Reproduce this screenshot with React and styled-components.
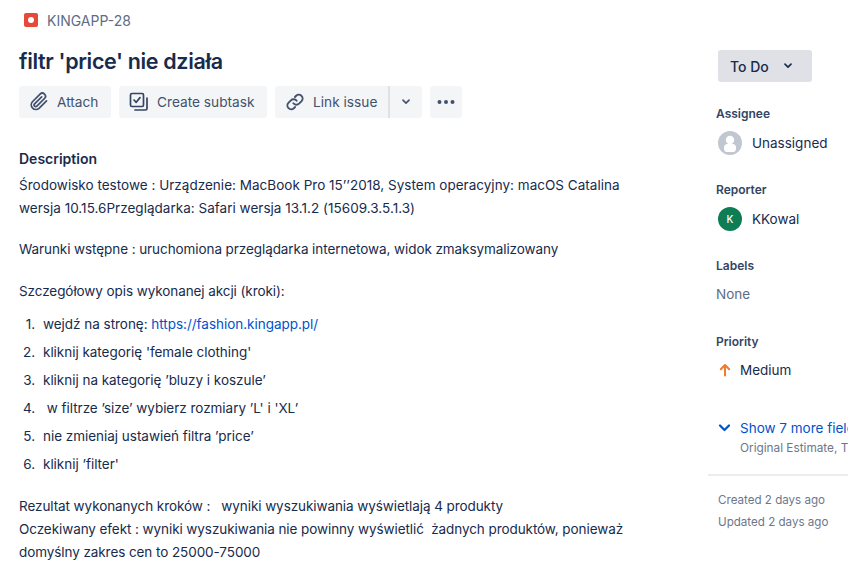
import styled, { createGlobalStyle } from 'styled-components';

const GlobalStyle = createGlobalStyle`
	html, body {
		margin: 0;
		padding: 0;
		background: #fff;
		overflow: hidden;
	}
	body {
		font-family: Inter, "Noto Sans", sans-serif;
		font-size: 13.5px;
		color: #172b4d;
	}
`;

const Page = styled.div`
	display: flex;
	width: 848px;
	height: 575px;
	overflow: hidden;
`;

const Main = styled.main`
	width: 708px;
	flex-shrink: 0;
	padding: 11px 0 0 19px;
	box-sizing: border-box;
`;

const Breadcrumb = styled.div`
	display: flex;
	align-items: center;
	gap: 9px;
	height: 18px;
	padding-left: 5px;
	color: #5e6c84;
	font-size: 14px;
`;

const BugIcon = styled.span`
	display: flex;
	align-items: center;
	justify-content: center;
	width: 14px;
	height: 14px;
	border-radius: 2px;
	background: #e5493a;

	&::after {
		content: '';
		width: 6px;
		height: 6px;
		border-radius: 50%;
		background: #fff;
	}
`;

const Title = styled.h1`
	margin: 17px 0 0;
	font-size: 21.5px;
	line-height: 30px;
	font-weight: 600;
	letter-spacing: -0.35px;
	color: #172b4d;
`;

const Toolbar = styled.div`
	display: flex;
	gap: 8px;
	margin-top: 10px;
`;

const ToolButton = styled.button`
	display: flex;
	align-items: center;
	gap: 8px;
	height: 32px;
	padding: 0 12.5px 0 10px;
	border: 0;
	border-radius: 3px;
	background: #f4f5f7;
	color: #42526e;
	font: inherit;
	font-size: 13.7px;
	white-space: nowrap;
`;

const ButtonGroup = styled.div`
	display: flex;
`;

const GroupStart = styled(ToolButton)`
	width: 115px;
	padding-right: 0;
	border-radius: 3px 0 0 3px;
	border-right: 2px solid #dfe1e6;
`;

const GroupEnd = styled(ToolButton)`
	width: 32px;
	padding: 0;
	justify-content: center;
	border-radius: 0 3px 3px 0;
`;

const MoreButton = styled(ToolButton)`
	width: 32px;
	padding: 0;
	justify-content: center;
`;

const Description = styled.section`
	margin-top: 29px;
	width: 640px;
	line-height: 23px;
	color: #172b4d;
`;

const SectionHeading = styled.h2`
	margin: 0 0 4px;
	font-size: 14px;
	line-height: 23px;
	font-weight: 600;
`;

const Paragraph = styled.p`
	margin: 0 0 ${(p) => p.$after || 0}px;
	white-space: pre-wrap;
	letter-spacing: ${(p) => (p.$loose ? 0.02 : -0.08)}px;
`;

const Steps = styled.ol`
	margin: 0 0 17px;
	padding: 0;
	list-style: none;
	counter-reset: step;
`;

const Step = styled.li`
	height: 28px;
	line-height: 28px;
	white-space: pre;
	counter-increment: step;
	letter-spacing: -0.03px;

	&::before {
		content: counter(step) '.';
		display: inline-block;
		width: 16px;
		margin-right: 8px;
		text-align: right;
	}
`;

const Link = styled.a`
	color: #0052cc;
	text-decoration: none;
`;

const Sidebar = styled.aside`
	width: 140px;
	flex-shrink: 0;
	padding-top: 50px;
	box-sizing: border-box;
	white-space: nowrap;
`;

const StatusButton = styled.button`
	display: flex;
	align-items: center;
	gap: 15px;
	width: 94px;
	height: 32px;
	margin-left: 10px;
	padding: 0 0 0 12px;
	border: 0;
	border-radius: 3px;
	background: #dfe1e6;
	color: #172b4d;
	font: inherit;
	font-size: 14px;
	font-weight: 500;
`;

const Field = styled.div`
	padding-left: 8px;
	height: 76px;

	&:first-of-type {
		margin-top: 24px;
	}
`;

const FieldLabel = styled.div`
	font-size: 12px;
	line-height: 16px;
	font-weight: 600;
	color: #344563;
`;

const FieldValue = styled.div`
	display: flex;
	align-items: center;
	gap: ${(p) => p.$gap || 10}px;
	height: 24px;
	margin-top: ${(p) => p.$top || 8}px;
	padding-left: ${(p) => (p.$muted ? 0 : 2)}px;
	color: ${(p) => (p.$muted ? '#5e6c84' : '#172b4d')};
`;

const Avatar = styled.span`
	display: flex;
	align-items: center;
	justify-content: center;
	width: 24px;
	height: 24px;
	border-radius: 50%;
	background: #0f7d54;
	color: #fff;
	font-size: 10px;
	font-weight: 500;
`;

const MoreFields = styled.div`
	display: flex;
	gap: 9px;
	margin-top: 8px;
	padding-left: 10px;
`;

const MoreChevron = styled.svg`
	flex-shrink: 0;
`;

const MoreTitle = styled.div`
	color: #0052cc;
	line-height: 20px;
`;

const MoreHint = styled.div`
	color: #6b778c;
	font-size: 11.8px;
	line-height: 20px;
`;

const Divider = styled.hr`
	height: 2px;
	margin: 16px 0 0;
	border: 0;
	background: #ebecf0;
`;

const Timestamps = styled.div`
	padding: 13px 0 0 10px;
	color: #6b778c;
	font-size: 11.6px;
	line-height: 22px;
`;

const Chevron = ({ color = '#42526e', width = 8 }) => (
	<svg width={width} height={width * 0.7} viewBox="0 0 10 7" fill="none">
		<path d="M1.2 1.4 5 5.2l3.8-3.8" stroke={color} strokeWidth="2" strokeLinecap="round" strokeLinejoin="round" />
	</svg>
);

const PaperclipIcon = () => (
	<svg width="20" height="20" viewBox="0 0 24 24" fill="none" stroke="#42526e" strokeWidth="2.1" strokeLinecap="round" strokeLinejoin="round">
		<path d="M21 10.6 12 19.6a5.6 5.6 0 0 1-7.9-7.9l9.2-9.2a3.7 3.7 0 0 1 5.3 5.3l-9.2 9.2a1.9 1.9 0 0 1-2.7-2.7l8.5-8.5" />
	</svg>
);

const SubtaskIcon = () => (
	<svg width="20" height="20" viewBox="0 0 20 20" fill="none" stroke="#344563" strokeWidth="1.7" strokeLinejoin="round" strokeLinecap="round">
		<rect x="1.5" y="1.5" width="13" height="13" rx="1.4" />
		<path d="M5 8l2.2 2.3L11 5.6" />
		<path d="M18 6v10.5a1.5 1.5 0 0 1-1.5 1.5H6" />
	</svg>
);

const LinkIcon = () => (
	<svg width="20" height="20" viewBox="0 0 24 24" fill="none" stroke="#42526e" strokeWidth="2.3" strokeLinecap="round" strokeLinejoin="round">
		<path d="M10 13.5a4.6 4.6 0 0 0 6.9.5l3-3a4.6 4.6 0 0 0-6.5-6.5l-1.5 1.5" />
		<path d="M14 10.5a4.6 4.6 0 0 0-6.9-.5l-3 3a4.6 4.6 0 0 0 6.5 6.5l1.5-1.5" />
	</svg>
);

const DotsIcon = () => (
	<svg width="18" height="4" viewBox="0 0 18 4" fill="#42526e">
		<circle cx="2.5" cy="2" r="2" />
		<circle cx="9" cy="2" r="2" />
		<circle cx="15.5" cy="2" r="2" />
	</svg>
);

const UnassignedIcon = () => (
	<svg width="24" height="24" viewBox="0 0 24 24">
		<circle cx="12" cy="12" r="12" fill="#c1c7d0" />
		<circle cx="12" cy="9" r="4.2" fill="#fff" />
		<rect x="6" y="13" width="12" height="8" rx="3.6" fill="#fff" />
	</svg>
);

const ArrowUpIcon = () => (
	<svg width="14" height="14" viewBox="0 0 14 14" fill="none" stroke="#ee7b2f" strokeWidth="2" strokeLinecap="round" strokeLinejoin="round">
		<path d="M7 12.5V2M2.8 6.2 7 2l4.2 4.2" />
	</svg>
);

const steps = [
	'kliknij kategorię \'female clothing\'',
	'kliknij na kategorię ’bluzy i koszule’',
	' w filtrze ’size’ wybierz rozmiary ’L\' i \'XL’',
	'nie zmieniaj ustawień filtra ’price’',
	'kliknij ’filter\'',
];

const App = () => {
	return (
		<>
			<GlobalStyle />
			<Page>
				<Main>
					<Breadcrumb>
						<BugIcon />
						KINGAPP-28
					</Breadcrumb>
					<Title>filtr 'price' nie działa</Title>
					<Toolbar>
						<ToolButton>
							<PaperclipIcon />
							Attach
						</ToolButton>
						<ToolButton>
							<SubtaskIcon />
							Create subtask
						</ToolButton>
						<ButtonGroup>
							<GroupStart>
								<LinkIcon />
								Link issue
							</GroupStart>
							<GroupEnd>
								<Chevron />
							</GroupEnd>
						</ButtonGroup>
						<MoreButton>
							<DotsIcon />
						</MoreButton>
					</Toolbar>
					<Description>
						<SectionHeading>Description</SectionHeading>
						<Paragraph $after={18} $loose>
							Środowisko testowe : Urządzenie: MacBook Pro 15’’2018, System operacyjny: macOS Catalina wersja 10.15.6Przeglądarka: Safari wersja 13.1.2 (15609.3.5.1.3)
						</Paragraph>
						<Paragraph $after={19}>Warunki wstępne : uruchomiona przeglądarka internetowa, widok zmaksymalizowany</Paragraph>
						<Paragraph $after={7}>Szczegółowy opis wykonanej akcji (kroki):</Paragraph>
						<Steps>
							<Step>
								wejdź na stronę: <Link href="#">https://fashion.kingapp.pl/</Link>
							</Step>
							{steps.map((step) => (
								<Step key={step}>{step}</Step>
							))}
						</Steps>
						<Paragraph>Rezultat wykonanych kroków :   wyniki wyszukiwania wyświetlają 4 produkty</Paragraph>
						<Paragraph>
							Oczekiwany efekt : wyniki wyszukiwania nie powinny wyświetlić  żadnych produktów, ponieważ domyślny zakres cen to 25000-75000
						</Paragraph>
					</Description>
				</Main>
				<Sidebar>
					<StatusButton>
						To Do
						<Chevron color="#172b4d" />
					</StatusButton>
					<Field>
						<FieldLabel>Assignee</FieldLabel>
						<FieldValue $top={9}>
							<UnassignedIcon />
							Unassigned
						</FieldValue>
					</Field>
					<Field>
						<FieldLabel>Reporter</FieldLabel>
						<FieldValue $top={9}>
							<Avatar>K</Avatar>
							KKowal
						</FieldValue>
					</Field>
					<Field>
						<FieldLabel>Labels</FieldLabel>
						<FieldValue $muted>None</FieldValue>
					</Field>
					<Field>
						<FieldLabel>Priority</FieldLabel>
						<FieldValue $gap={8}>
							<ArrowUpIcon />
							Medium
						</FieldValue>
					</Field>
					<MoreFields>
						<MoreChevron width="13" height="24" viewBox="0 0 13 24" fill="none">
							<path d="M2 7.5 6.5 12 11 7.5" stroke="#0052cc" strokeWidth="2.2" strokeLinecap="round" strokeLinejoin="round" />
						</MoreChevron>
						<div>
							<MoreTitle>Show 7 more fields</MoreTitle>
							<MoreHint>Original Estimate, Time tracking</MoreHint>
						</div>
					</MoreFields>
					<Divider />
					<Timestamps>
						<div>Created 2 days ago</div>
						<div>Updated 2 days ago</div>
					</Timestamps>
				</Sidebar>
			</Page>
		</>
	);
};

export default App;
